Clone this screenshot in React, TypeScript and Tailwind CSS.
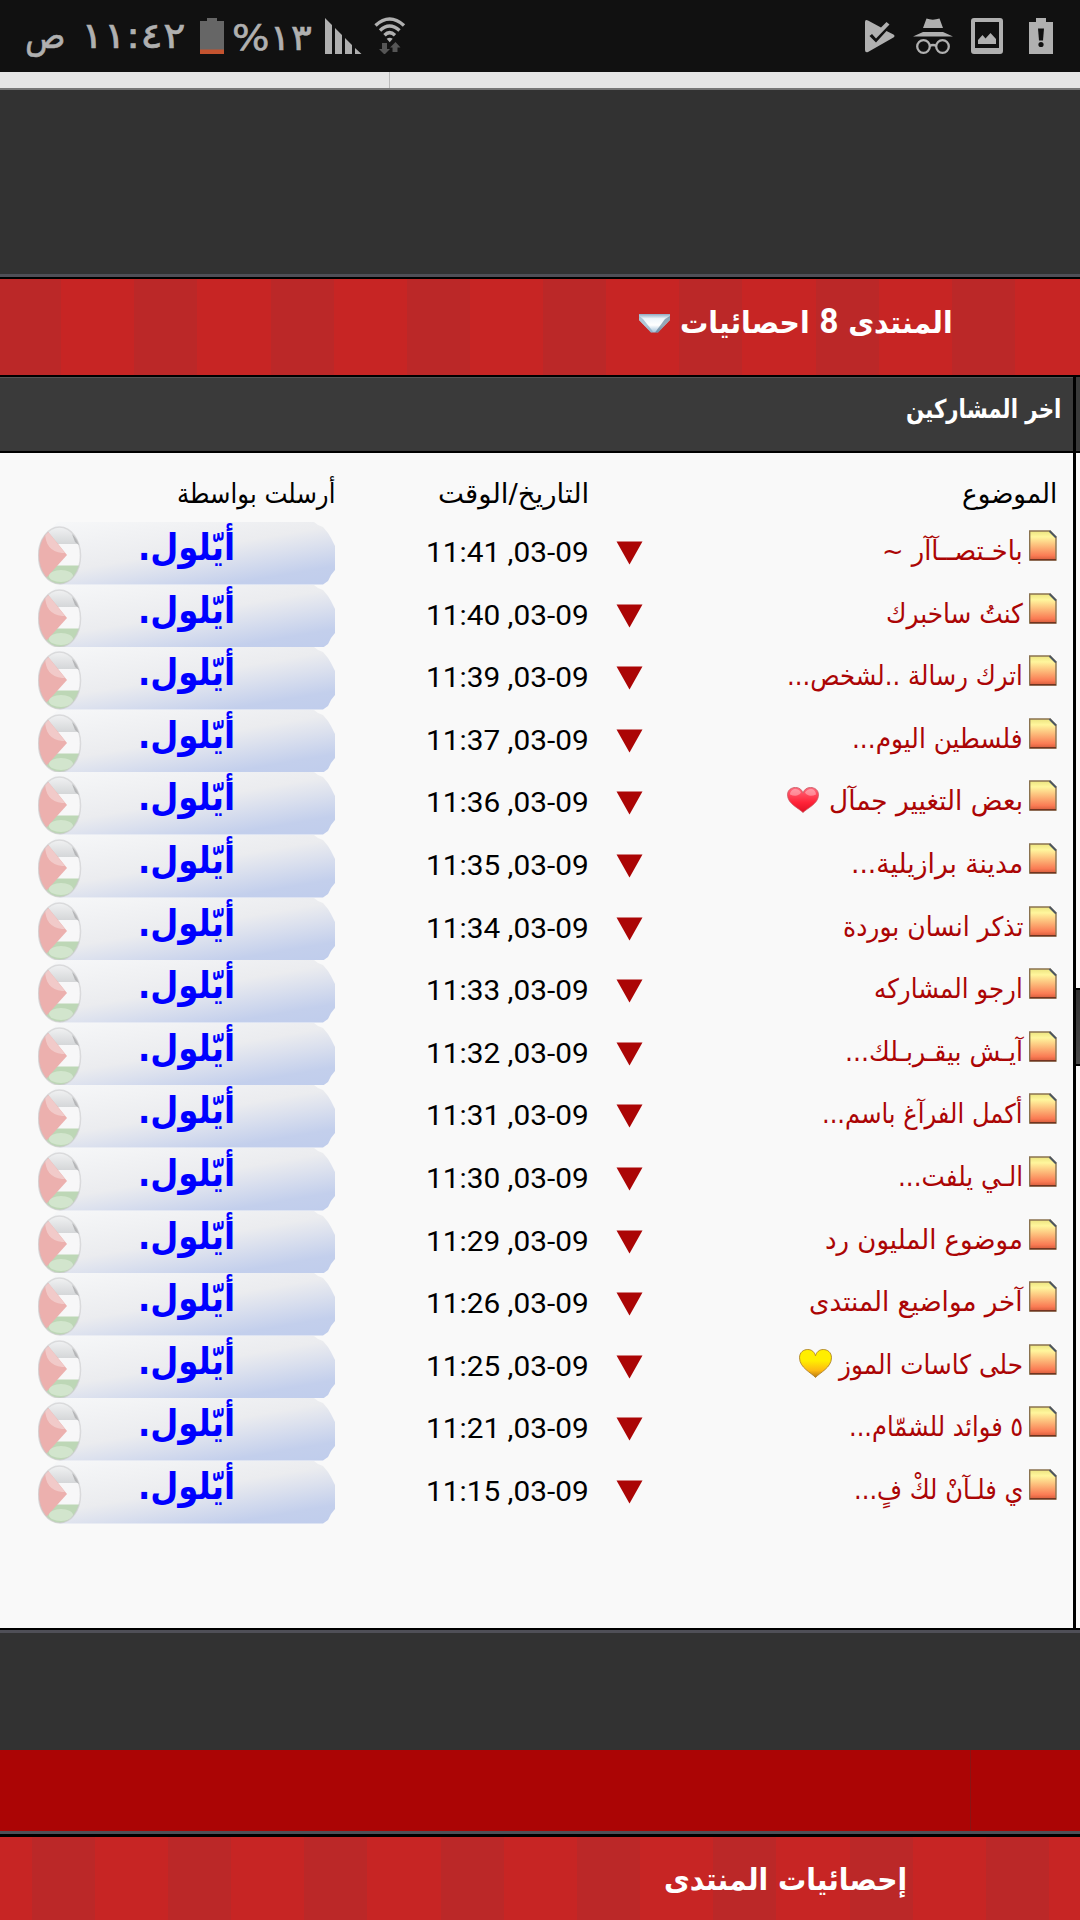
import { useLayoutEffect, useRef, useState } from "react";
import type { ReactNode } from "react";

interface FitTextProps {
  width: number;
  className?: string;
  children: ReactNode;
}

// Squeezes or stretches one line of text to the given width, anchored right.
function FitText({ width, className, children }: FitTextProps) {
  const ref = useRef<HTMLSpanElement | null>(null);
  const [scale, setScale] = useState(1);

  useLayoutEffect(() => {
    if (ref.current) setScale(width / ref.current.offsetWidth);
  }, [width]);

  return (
    <span dir="rtl" className={`block shrink-0 whitespace-nowrap ${className || ""}`} style={{ width }}>
      <span ref={ref} className="inline-block origin-right align-top" style={{ transform: `scaleX(${scale})` }}>
        {children}
      </span>
    </span>
  );
}

interface Topic {
  title: string;
  width: number;
  time: string;
  heart?: "red" | "yellow";
}

const topics: Topic[] = [
  { title: "باخـتصــآآر ~", width: 141, time: "11:41" },
  { title: "كنتُ ساخبرك", width: 137, time: "11:40" },
  { title: "اترك رسالة ..لشخص...", width: 236, time: "11:39" },
  { title: "فلسطين اليوم...", width: 171, time: "11:37" },
  { title: "بعض التغيير جمآل", width: 194, time: "11:36", heart: "red" },
  { title: "مدينة برازيلية...", width: 172, time: "11:35" },
  { title: "تذكر انسان بوردة", width: 180, time: "11:34" },
  { title: "ارجو المشاركه", width: 149, time: "11:33" },
  { title: "آيـش بيقـربـلك...", width: 178, time: "11:32" },
  { title: "أكمل الفرآغ باسم...", width: 201, time: "11:31" },
  { title: "الـي يلفت...", width: 125, time: "11:30" },
  { title: "موضوع المليون رد", width: 198, time: "11:29" },
  { title: "آخر مواضيع المنتدى", width: 214, time: "11:26" },
  { title: "حلى كاسات الموز", width: 184, time: "11:25", heart: "yellow" },
  { title: "٥ فوائد للشمّام...", width: 174, time: "11:21" },
  { title: "ي فلـآنْ لكْ فٍ...", width: 169, time: "11:15" },
];

function StatusBar() {
  return (
    <div dir="ltr" className="flex h-[72px] items-start bg-[#111111] pl-[25px] text-[#b0b0b0]">
      <div dir="rtl" className="mt-[12px] flex w-[160px] justify-between text-[36px] leading-[48px] [-webkit-text-stroke:0.6px_#b0b0b0]">
        <FitText width={104}>١١:٤٢</FitText>
        <FitText width={41}>ص</FitText>
      </div>
      <svg className="mt-[18px] ml-[15px] h-9 w-6" viewBox="0 0 24 36">
        <path d="M7 0h10v3h7v33H0V3h7z" fill="#666" />
        <path d="M0 31.5h24V36H0z" fill="#c4532f" />
      </svg>
      <FitText width={80} className="mt-[14px] ml-[8px] text-[36px] leading-[48px] [-webkit-text-stroke:0.6px_#b0b0b0]">
        ١٣%
      </FitText>
      <svg className="mt-[18px] ml-[13px] h-9 w-[37px]" viewBox="0 0 37 36" fill="currentColor">
        <path d="M0 0l7 7v29H0zM10 10l7 7v19h-7zM20 20l7 7v9h-7zM30 30l6.500 6H30z" />
      </svg>
      <svg className="mt-4 ml-[12px] h-[38px] w-8" viewBox="0 0 32 38" fill="none" stroke="currentColor">
        <path d="M1.500 9.500Q15.500-3.500 30 9.500M6 14.500Q15.500 5.500 25.500 14.500M10.500 19.200Q15.500 14 21 19.200" strokeWidth="3.400" />
        <path d="M12.700 22.700q3-2 6 0l-3 3.500z" fill="currentColor" stroke="none" />
        <path d="M8 27h5v6h3l-5.500 5.500L5 33h3zM21.500 26l5 5.500h-3V36h-5v-4.500H16z" fill="#555" stroke="none" />
      </svg>

      <div className="mt-[18px] ml-auto flex pr-[27px]">
        <svg className="h-9 w-[30px]" viewBox="0 0 30 36">
          <path d="M0 4q0-3 3-1.500l13 7 5.500-5.500 3 2.500-13.500 14-4-4.500-2.500 2 6.500 6.500L21.500 13l6.500 3.300q3 1.700 0 3.500L3 34q-3 1-3-2z" fill="currentColor" />
        </svg>
        <svg className="ml-[18px] h-9 w-10" viewBox="0 0 40 36" fill="currentColor">
          <path d="M13.500.5q6 2.300 13 0L30 10H10zM10 14h20l10 4.500H0z" />
          <g fill="none" stroke="currentColor" strokeWidth="2.300">
            <circle cx="10.500" cy="28.500" r="6.300" />
            <circle cx="29.500" cy="28.500" r="6.300" />
            <path d="M16.500 28q3.500-2 7 0" />
          </g>
        </svg>
        <svg className="ml-[18px] h-9 w-8" viewBox="0 0 32 36" fill="currentColor">
          <path fillRule="evenodd" d="M3 0h26q3 0 3 3v30q0 3-3 3H3q-3 0-3-3V3q0-3 3-3zm1 4v26h24V4z" />
          <path d="M7 26v-4l4.500-5 3 3.500 5-5.500 5.500 6v5z" />
        </svg>
        <svg className="ml-[26px] h-9 w-6" viewBox="0 0 24 36">
          <path d="M7 0h10v4h7v32H0V4h7z" fill="currentColor" />
          <path d="M9 10.500h6l-1 12h-4z" fill="#111" />
          <circle cx="12" cy="26.500" r="2.600" fill="#111" />
        </svg>
      </div>
    </div>
  );
}

function DocIcon() {
  return (
    <svg className="mt-2 h-[31px] w-7 shrink-0" viewBox="0 0 28 31">
      <path d="M.7 1H21l6 6v23H.7z" fill="url(#doc)" stroke="#8a7350" strokeWidth="1.400" />
      <path d="M20.500 1l6.500 6.500" stroke="#4c5660" strokeWidth="2" />
      <path d="M1 29.700h26" stroke="#713421" strokeWidth="1.400" />
    </svg>
  );
}

function Heart({ color }: { color: "red" | "yellow" }) {
  const yellow = color === "yellow";
  return (
    <svg className={yellow ? "mt-[13px] mr-[7px] h-[29px] w-[33px]" : "mt-[15px] mr-[10px] h-[26px] w-8"} viewBox="0 0 32 28" preserveAspectRatio="none">
      <path
        d="M16 27.500C12 23 .5 18 .5 8.500.5 3 4.500.5 8.500.5S15 3 16 6.500C17 3 19.500.5 23.500.5s8 2.500 8 8C31.500 18 20 23 16 27.500z"
        fill={yellow ? "url(#gold)" : "url(#rose)"}
        stroke={yellow ? "#a97a22" : "#c75862"}
        strokeWidth=".8"
      />
      {!yellow && <path d="M3 8c0-7 9-8 11-2-2 4-7 4-11 2zM18 6c3-6 11-5 11 2-4 2-9 2-11-2z" fill="#fff" opacity=".35" />}
    </svg>
  );
}

function MemberBadge() {
  return (
    <div className="relative h-full w-[297px] shrink-0 overflow-hidden">
      <svg className="absolute inset-0 h-full w-full" viewBox="0 0 297 62.600" preserveAspectRatio="none">
        <path d="M20 0H276l4 3 5 2 5 6 3 5 4 8v24l-4 5-3 6-5 3.600H22Q8 48 8 30 8 8 20 0z" fill="url(#pill)" />
        <g clipPath="url(#flagClip)">
          <path d="M0 0h43v23H0z" fill="url(#flagTop)" />
          <path d="M0 22h43v22H0z" fill="#f7f7f8" />
          <path d="M0 43.500h43v22H0z" fill="#bdd7b6" />
          <path d="M0 6h7l22 27L10 54l-4 4H0z" fill="#ecb0ae" />
          <path d="M7 10q0 19 17 21l3 0L11 11z" fill="#f3d3d1" opacity=".75" />
          <ellipse cx="23" cy="54" rx="12" ry="6" fill="#dcebd7" opacity=".7" />
          <path d="M34 12q5 4 8 12l-5-4z" fill="#b5b6b8" />
        </g>
        <ellipse cx="21.500" cy="33.500" rx="21" ry="28.500" fill="none" stroke="#c9c9cc" strokeOpacity=".6" strokeWidth="1.500" />
      </svg>
      <FitText width={97} className="relative mr-[100px] text-[37px] leading-[52px] font-bold text-[#0000ff]">
        أيّلول.
      </FitText>
    </div>
  );
}

function TopicRow({ topic }: { topic: Topic }) {
  return (
    <div className="flex h-[62.6px] items-start">
      <div className="flex w-[414px] shrink-0 items-start">
        <DocIcon />
        <FitText width={topic.width} className="mr-[6px] text-[27px] leading-[57px] text-[#ab0505]">
          {topic.title}
        </FitText>
        {topic.heart && <Heart color={topic.heart} />}
      </div>
      <svg className="mt-[19px] h-6 w-[27px] shrink-0" viewBox="0 0 27 24">
        <path d="M.5.5h26L13.500 23.500z" fill="#ab0505" />
      </svg>
      <FitText width={163} className="mr-[27px] font-[Roboto,sans-serif] text-[28.5px] leading-[62px] text-black">
        03-09, {topic.time}
      </FitText>
      <div className="mr-[91px] h-full">
        <MemberBadge />
      </div>
    </div>
  );
}

export default function App() {
  return (
    <div dir="rtl" className="h-[1920px] w-[1080px] overflow-hidden bg-[#323232] font-['DejaVu_Sans',sans-serif]">
      <svg className="absolute h-0 w-0">
        <defs>
          <linearGradient id="doc" x1="0" y1="0" x2="0" y2="1">
            <stop offset="0" stopColor="#ece47f" />
            <stop offset=".2" stopColor="#fff69d" />
            <stop offset=".85" stopColor="#fa7b54" />
            <stop offset="1" stopColor="#d65c3b" />
          </linearGradient>
          <linearGradient id="gold" x1="0" y1="0" x2="0" y2="1">
            <stop offset=".4" stopColor="#ffee00" />
            <stop offset=".75" stopColor="#fdb913" />
            <stop offset="1" stopColor="#b87813" />
          </linearGradient>
          <linearGradient id="rose" x1="0" y1="0" x2="0" y2="1">
            <stop offset="0" stopColor="#ff6b7d" />
            <stop offset=".6" stopColor="#ff2338" />
            <stop offset="1" stopColor="#e00f24" />
          </linearGradient>
          <linearGradient id="pill" gradientUnits="userSpaceOnUse" x1="0" y1="0" x2="18.600" y2="109.400">
            <stop offset="0" stopColor="#f7f8f9" />
            <stop offset=".48" stopColor="#ebecef" />
            <stop offset=".62" stopColor="#dce1ee" />
            <stop offset=".84" stopColor="#c3cfec" />
            <stop offset="1" stopColor="#c0cdec" />
          </linearGradient>
          <linearGradient id="flagTop" x1="0" y1="0" x2="0" y2="1">
            <stop offset=".2" stopColor="#f1f2f3" />
            <stop offset="1" stopColor="#d3d5d7" />
          </linearGradient>
          <linearGradient id="arrow" x1="0" y1="0" x2="0" y2="1">
            <stop offset="0" stopColor="#8fabc2" />
            <stop offset=".25" stopColor="#eef6fb" />
            <stop offset=".6" stopColor="#ffffff" />
            <stop offset="1" stopColor="#9fc0da" />
          </linearGradient>
          <clipPath id="flagClip">
            <ellipse cx="21.500" cy="33.500" rx="21" ry="28.500" />
          </clipPath>
        </defs>
      </svg>

      <StatusBar />
      <div dir="ltr" className="h-[18px] border-b-2 border-[#777777] bg-[#e6e6e6]">
        <div className="h-full w-[390px] border-r border-[#bbbbbb]" />
      </div>

      <div className="h-[187px] border-b-[3px] border-[#4f4f57]" />
      <div className="flex h-[100px] items-start border-t-2 border-b-2 border-black bg-[repeating-linear-gradient(90deg,#bb2828_0px,#bb2828_63px,#c72524_63px,#c72524_136.3px)] bg-[position:-2px_0] bg-[size:1090px_100%] pr-[127px] text-white">
        <FitText width={273} className="mt-[14px] text-[30px] leading-[59px] font-bold">
          المنتدى <span className="font-[Roboto,sans-serif] text-[35px] leading-none">8</span> احصائيات
        </FitText>
        <svg className="mt-[35px] mr-[10px] h-5 w-[31px]" viewBox="0 0 31 20">
          <path d="M0 0h31v6L19 18.500h-7L0 6z" fill="url(#arrow)" />
          <path d="M31 2v4L19 18.500h-3L26 5z" fill="#41657f" opacity=".55" />
          <path d="M0 2v4l12 12.500 2-1L4 5z" fill="#7ea3bd" opacity=".6" />
        </svg>
      </div>

      <div className="flex h-[1251px]">
        <div className="w-1 shrink-0 bg-[#f9f9f9]">
          <div className="h-[76px] border-b-2 border-black bg-[#3a3a3a]" />
          <div className="mt-[535px] h-[78px] border-t-2 border-b-2 border-black bg-gradient-to-b from-[#333333] to-[#4a4a4a]" />
        </div>
        <div className="w-[1076px] border-r-[3px] border-black bg-[#f9f9f9]">
          <div className="h-[76px] border-t border-b-2 border-t-[#545454] border-b-black bg-[#3a3a3a] pr-[12px] text-white">
            <FitText width={155} className="text-[26px] leading-[63px] font-bold">
              اخر المشاركين
            </FitText>
          </div>
          <div className="pr-4">
            <div className="flex h-[69px] items-start pt-[10px] text-[27px] leading-[61px] text-black">
              <FitText width={95}>الموضوع</FitText>
              <FitText width={151} className="mr-[373px]">التاريخ/الوقت</FitText>
              <FitText width={158} className="mr-[103px]">أرسلت بواسطة</FitText>
            </div>
            {topics.map((topic) => (
              <TopicRow key={topic.time} topic={topic} />
            ))}
          </div>
        </div>
      </div>

      <div className="h-[122px] border-t-2 border-black">
        <div className="h-[3px] bg-[#4f4f57]" />
      </div>
      <div className="flex h-[81px] bg-[#ab0505]">
        <div className="w-[110px] border-l border-[#8a1414]" />
      </div>
      <div className="h-[3px] bg-[#4f4f57]" />
      <div className="flex h-[88px] items-start border-t-[3px] border-black bg-[repeating-linear-gradient(90deg,#bb2828_0px,#bb2828_63px,#c72524_63px,#c72524_136.3px)] bg-[position:-104.5px_0] bg-[size:1200px_100%] pr-[173px] text-white">
        <FitText width={243} className="mt-[13px] text-[30px] leading-[59px] font-bold">
          إحصائيات المنتدى
        </FitText>
      </div>
    </div>
  );
}
